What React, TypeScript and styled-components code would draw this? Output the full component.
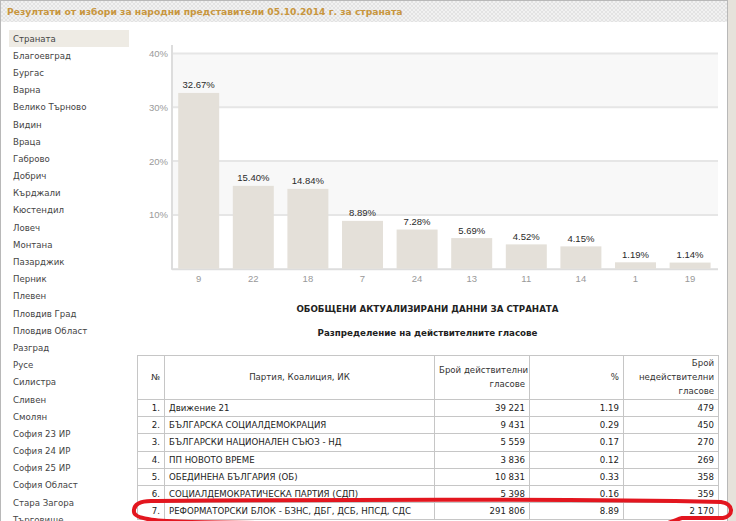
import React from "react";
import styled, { createGlobalStyle } from "styled-components";

const GlobalStyle = createGlobalStyle`
  html, body {
    margin: 0;
    padding: 0;
    background: #e6e2db;
    overflow: hidden;
  }
  body {
    font-family: "DejaVu Sans", "Liberation Sans", sans-serif;
    color: #444;
  }
`;

const Frame = styled.div`
  position: relative;
  width: 726px;
  min-height: 540px;
  background: #fff;
  border: 1px solid #b8b8b8;
  border-bottom: none;
`;

const TitleBar = styled.div`
  height: 21px;
  display: flex;
  align-items: center;
  padding-left: 6px;
  background: repeating-conic-gradient(#e3e3e3 0 25%, #f1f1f1 0 50%) 0 0 / 4px 4px;
  color: #c8963e;
  font-weight: bold;
  font-size: 9.2px;
`;

const Body = styled.div`
  display: flex;
`;

const Sidebar = styled.ul`
  flex: 0 0 120px;
  margin: 0;
  padding: 8px 0 0 8px;
  list-style: none;
`;

const RegionItem = styled.li<{ $active?: boolean }>`
  height: 17.2px;
  display: flex;
  align-items: center;
  padding-left: 4px;
  font-size: 8.6px;
  white-space: nowrap;
  color: #444;
  background: ${(p) => (p.$active ? "#eeebe4" : "transparent")};
`;

const Main = styled.div`
  flex: 1;
  min-width: 0;
  padding: 18px 7px 0 8px;
`;

const ChartSvg = styled.svg`
  display: block;
  width: 583px;
  height: 250px;
  font-family: "Liberation Sans", Arial, sans-serif;
`;

const Heading = styled.div<{ $gap: number }>`
  width: 581px;
  margin-top: ${(p) => p.$gap}px;
  line-height: 14px;
  text-align: center;
  font-weight: bold;
  font-size: 8.7px;
  color: #222;
`;

const Table = styled.table`
  width: 581px;
  margin-top: 15px;
  border-collapse: collapse;
  table-layout: fixed;
  font-size: 8.6px;
  color: #222;
`;

const Th = styled.th<{ $w: number; $align?: string }>`
  box-sizing: border-box;
  width: ${(p) => p.$w}px;
  padding: 0 4px 1px;
  border: 1px solid #c6c6c6;
  line-height: 14px;
  font-weight: normal;
  white-space: nowrap;
  color: #333;
  text-align: ${(p) => p.$align || "right"};
  vertical-align: middle;
`;

const Td = styled.td<{ $align?: string }>`
  padding: 1px 4px;
  border: 1px solid #c6c6c6;
  line-height: 14.2px;
  text-align: ${(p) => p.$align || "right"};
  white-space: nowrap;
  overflow: hidden;
`;

const Mark = styled.svg`
  position: absolute;
  left: 130px;
  top: 495px;
  width: 606px;
  height: 34px;
  overflow: visible;
  pointer-events: none;
`;

const regions = [
  "Страната",
  "Благоевград",
  "Бургас",
  "Варна",
  "Велико Търново",
  "Видин",
  "Враца",
  "Габрово",
  "Добрич",
  "Кърджали",
  "Кюстендил",
  "Ловеч",
  "Монтана",
  "Пазарджик",
  "Перник",
  "Плевен",
  "Пловдив Град",
  "Пловдив Област",
  "Разград",
  "Русе",
  "Силистра",
  "Сливен",
  "Смолян",
  "София 23 ИР",
  "София 24 ИР",
  "София 25 ИР",
  "София Област",
  "Стара Загора",
  "Търговище",
];

const bars = [
  { id: "9", pct: 32.67 },
  { id: "22", pct: 15.4 },
  { id: "18", pct: 14.84 },
  { id: "7", pct: 8.89 },
  { id: "24", pct: 7.28 },
  { id: "13", pct: 5.69 },
  { id: "11", pct: 4.52 },
  { id: "14", pct: 4.15 },
  { id: "1", pct: 1.19 },
  { id: "19", pct: 1.14 },
];

const rows = [
  ["1.", "Движение 21", "39 221", "1.19", "479"],
  ["2.", "БЪЛГАРСКА СОЦИАЛДЕМОКРАЦИЯ", "9 431", "0.29", "450"],
  ["3.", "БЪЛГАРСКИ НАЦИОНАЛЕН СЪЮЗ - НД", "5 559", "0.17", "270"],
  ["4.", "ПП НОВОТО ВРЕМЕ", "3 836", "0.12", "269"],
  ["5.", "ОБЕДИНЕНА БЪЛГАРИЯ (ОБ)", "10 831", "0.33", "358"],
  ["6.", "СОЦИАЛДЕМОКРАТИЧЕСКА ПАРТИЯ (СДП)", "5 398", "0.16", "359"],
  ["7.", "РЕФОРМАТОРСКИ БЛОК - БЗНС, ДБГ, ДСБ, НПСД, СДС", "291 806", "8.89", "2 170"],
];

// chart geometry (svg origin sits at page 137,40)
const AX = 35;
const PW = 546;
const ZERO = 228.7;
const S = 5.38;
const SLOT = 54.6;

function Chart() {
  const y = (v: number) => ZERO - v * S;
  return (
    <ChartSvg viewBox="0 0 583 250">
      <rect x={AX} y={y(40)} width={PW} height={y(30) - y(40)} fill="#f8f8f8" />
      <rect x={AX} y={y(20)} width={PW} height={y(10) - y(20)} fill="#f8f8f8" />
      {[10, 20, 30, 40].map((v) => (
        <g key={v}>
          <line x1={AX} x2={AX + PW} y1={y(v)} y2={y(v)} stroke="#e6e6e6" strokeWidth={2} />
          <text x={31} y={y(v) + 3.5} textAnchor="end" fontSize={9.5} fill="#9a9a9a">
            {v}%
          </text>
        </g>
      ))}
      <line x1={AX} x2={AX} y1={5} y2={ZERO + 1} stroke="#dddddd" strokeWidth={2} />
      <line x1={AX} x2={AX + PW} y1={ZERO + 0.5} y2={ZERO + 0.5} stroke="#dddddd" strokeWidth={2} />
      {bars.map((b, i) => {
        const x = AX + 6.2 + SLOT * i;
        const top = y(b.pct);
        return (
          <g key={b.id}>
            <rect x={x} y={top} width={41} height={ZERO - top} fill="#e4e0d9" />
            <text x={x + 20.5} y={top - 4.5} textAnchor="middle" fontSize={9.5} fill="#2a2a2a">
              {b.pct.toFixed(2)}%
            </text>
            <text x={x + 20.5} y={241.5} textAnchor="middle" fontSize={9.5} fill="#999">
              {b.id}
            </text>
          </g>
        );
      })}
    </ChartSvg>
  );
}

export default function App() {
  return (
    <>
      <GlobalStyle />
      <Frame>
        <TitleBar>Резултати от избори за народни представители 05.10.2014 г. за страната</TitleBar>
        <Body>
          <Sidebar>
            {regions.map((r, i) => (
              <RegionItem key={r} $active={i === 0}>
                {r}
              </RegionItem>
            ))}
          </Sidebar>
          <Main>
            <Chart />
            <Heading $gap={12}>ОБОБЩЕНИ АКТУАЛИЗИРАНИ ДАННИ ЗА СТРАНАТА</Heading>
            <Heading $gap={10}>Разпределение на действителните гласове</Heading>
            <Table>
              <thead>
                <tr>
                  <Th $w={27} $align="right">№</Th>
                  <Th $w={270} $align="center">Партия, Коалиция, ИК</Th>
                  <Th $w={95}>
                    Брой действителни
                    <br />
                    гласове
                  </Th>
                  <Th $w={94}>%</Th>
                  <Th $w={95}>
                    Брой
                    <br />
                    недействителни
                    <br />
                    гласове
                  </Th>
                </tr>
              </thead>
              <tbody>
                {rows.map((r) => (
                  <tr key={r[0]}>
                    <Td>{r[0]}</Td>
                    <Td $align="left">{r[1]}</Td>
                    <Td>{r[2]}</Td>
                    <Td>{r[3]}</Td>
                    <Td>{r[4]}</Td>
                  </tr>
                ))}
              </tbody>
            </Table>
          </Main>
        </Body>
        <Mark viewBox="0 0 606 34">
          <path
            d="M 20 5 C 150 4, 400 2, 590 6 C 603 8, 603 20, 592 22 L 551 22 C 545 23, 543 27, 530 28 C 400 29, 150 28, 60 26 C 30 25, 4 24, 3 16 C 2 8, 10 5, 20 5 Z"
            fill="none"
            stroke="#e3161f"
            strokeWidth={4}
            strokeLinecap="round"
            strokeLinejoin="round"
          />
        </Mark>
      </Frame>
    </>
  );
}
